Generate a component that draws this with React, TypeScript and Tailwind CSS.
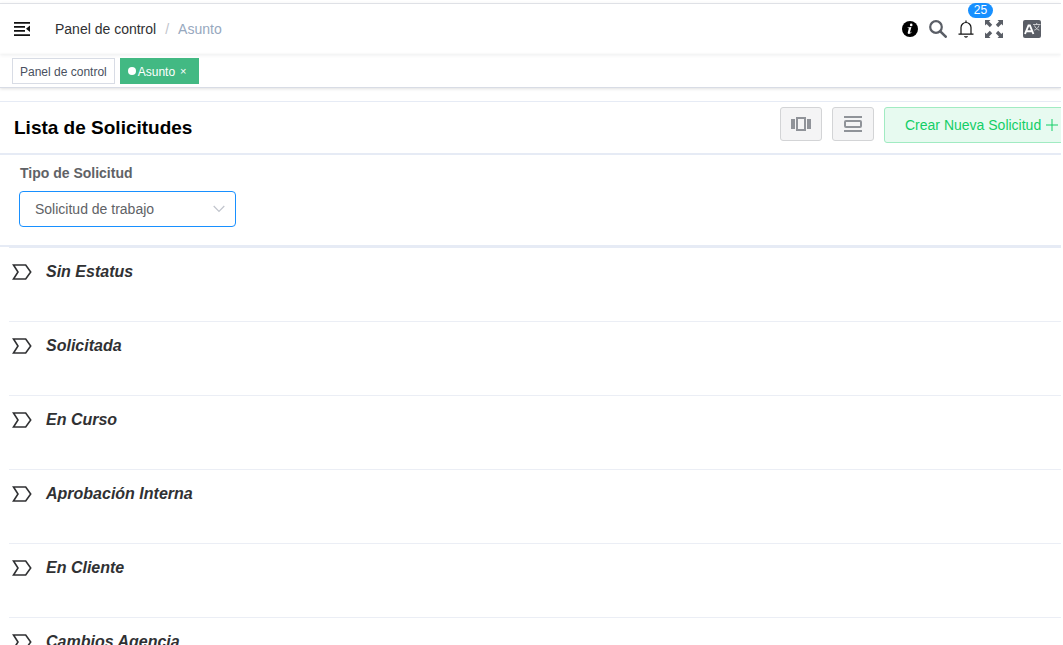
import React, { useState } from "react";

const statuses = [
  "Sin Estatus",
  "Solicitada",
  "En Curso",
  "Aprobación Interna",
  "En Cliente",
  "Cambios Agencia",
];

const FoldIcon = () => (
  <svg viewBox="0 0 16 14" className="h-[14px] w-4" fill="#111">
    <path d="M0 0h16v1.8H0zM0 4h11v1.8H0zM0 8h11v1.8H0zM0 12.2h16V14H0zM16 3.6v6.400l-4-3.200z" />
  </svg>
);

const InfoIcon = () => (
  <svg viewBox="0 0 16 16" className="h-4 w-4">
    <circle cx="8" cy="8" r="8" fill="#000" />
    <circle cx="9.2" cy="3.9" r="1.3" fill="#fff" />
    <path d="M5.6 6.4l3.8-.5-1.5 5.5c-.1.5.3.5.6.2l.8-.8.4.3c-.9 1.3-1.9 1.9-2.8 1.9-1 0-1.4-.7-1.1-1.7l1-3.7c.1-.5-.1-.7-1.3-.7z" fill="#fff" />
  </svg>
);

const SearchIcon = () => (
  <svg viewBox="0 0 18 18" className="h-[18px] w-[18px]" fill="none" stroke="#5a5e66">
    <circle cx="7" cy="7" r="5.8" strokeWidth="2.2" />
    <path d="M11.3 11.3l5.4 5.4" strokeWidth="2.6" strokeLinecap="round" />
  </svg>
);

const BellIcon = () => (
  <svg viewBox="0 0 16 18" className="h-[18px] w-4" fill="none" stroke="#111" strokeWidth="1.2">
    <path d="M8 .5v2M3 14V7.5a5 5 0 0 1 10 0V14M.5 14.1h15M6.5 16.3c.5 1 2.500 1 3 0" />
  </svg>
);

const FullscreenIcon = () => (
  <svg viewBox="0 0 18 18" className="h-[18px] w-[18px]" fill="#5a5e66">
    <path d="M0 0h5.500L4 1.600 7.200 4.800 4.800 7.200 1.600 4 0 5.500z" />
    <path d="M18 0v5.500L16.400 4l-3.200 3.200-2.400-2.400L14 1.600 12.500 0z" />
    <path d="M0 18v-5.500L1.600 14l3.200-3.200 2.400 2.400L4 16.400 5.500 18z" />
    <path d="M18 18h-5.500l1.500-1.600-3.200-3.200 2.400-2.400 3.200 3.200 1.600-1.500z" />
  </svg>
);

const LanguageIcon = () => (
  <svg viewBox="0 0 18 18" className="h-[18px] w-[18px]">
    <rect width="18" height="18" rx="2" fill="#5a5e66" />
    <path d="M2 14L5.500 5.500h1.400l3.500 8.500M3.500 11.300h5.400" fill="none" stroke="#fff" strokeWidth="1.9" />
    <path d="M10 4.500h7.500M13.700 3v1.500M11.500 5.500c.6 2 2.500 4 4.800 4.700M16 5.500c-.6 2-2.500 4-4.800 4.700" fill="none" stroke="#d5d6d8" strokeWidth=".9" />
  </svg>
);

const CarouselIcon = () => (
  <svg viewBox="0 0 20 16" className="h-4 w-5" fill="#909399">
    <path d="M0 3h4v10H0zM16 3h4v10h-4z" />
    <path d="M6 2h8v12H6z" fill="none" stroke="#909399" strokeWidth="2" />
  </svg>
);

const DayIcon = () => (
  <svg viewBox="0 0 18 16" className="h-4 w-[18px]" fill="none" stroke="#909399" strokeWidth="2">
    <path d="M0 1h18M0 15h18" />
    <rect x="1" y="5" width="16" height="6" rx="1" />
  </svg>
);

const LabelIcon = () => (
  <svg viewBox="0 0 20 16" className="h-4 w-5 shrink-0" fill="none" stroke="#303133" strokeWidth="1.6">
    <path d="M1.500 1h12.200L18.700 8l-5 7H1.500L6 8z" />
  </svg>
);

const App = () => {
  const [type, setType] = useState("trabajo");

  return (
    <div className="mr-[2px] overflow-x-hidden bg-white pt-[3px] font-['Liberation_Sans',Arial,sans-serif] text-[#303133]">
      <header className="flex h-[51px] items-center border-t border-[#dfe1e6] pr-5 pl-[14px] shadow-[0_1px_4px_rgba(0,21,41,0.08)]">
        <button aria-label="Contraer menú">
          <FoldIcon />
        </button>
        <nav className="ml-[25px] flex flex-1 gap-[9px] text-sm">
          <a href="#panel">Panel de control</a>
          <span className="text-[#c0c4cc]">/</span>
          <span className="text-[#97a8be]">Asunto</span>
        </nav>
        <div className="flex items-center gap-[11px]">
          <button aria-label="Información">
            <InfoIcon />
          </button>
          <button aria-label="Buscar">
            <SearchIcon />
          </button>
          <button aria-label="Notificaciones" className="relative">
            <BellIcon />
            <span className="absolute -top-[17px] left-[10px] h-[15px] w-[25px] rounded-full bg-[#1890ff] text-center text-xs leading-[15px] text-white">
              25
            </span>
          </button>
          <button aria-label="Pantalla completa">
            <FullscreenIcon />
          </button>
          <button aria-label="Idioma" className="ml-[9px]">
            <LanguageIcon />
          </button>
        </div>
      </header>

      <div className="flex h-[34px] items-center gap-[5px] border-b border-[#d8dce5] px-3 pb-1 pt-1 text-xs shadow-[0_1px_3px_rgba(0,0,0,0.12)]">
        <a href="#panel" className="h-[26px] border border-[#d8dce5] px-[7px] leading-[26px] text-[#495060]">
          Panel de control
        </a>
        <div className="flex h-[26px] items-center bg-[#42b983] px-2 leading-[26px] text-white">
          <span className="mr-[2px] h-2 w-2 rounded-full bg-white" />
          <a href="#asunto" className="pt-[2px]">Asunto</a>
          <button aria-label="Cerrar Asunto" className="ml-[5px] w-[11px] text-left text-[11px]">×</button>
        </div>
      </div>

      <main className="mt-[13px]">
        <div className="flex h-[54px] items-start border-t border-b-2 border-t-[#e6ebf5] border-b-[#e6ebf5] pt-[5px] pl-[14px]">
          <h1 className="flex-1 pt-2 text-[19px] leading-[26px] font-bold text-black">Lista de Solicitudes</h1>
          <div className="-mr-[22px] flex shrink-0 items-start gap-[10px]">
            <button aria-label="Vista de tablero" className="flex h-[34px] w-[42px] items-center justify-center rounded-[3px] border border-[#d3d4d6] bg-[#f4f4f5]">
              <CarouselIcon />
            </button>
            <button aria-label="Vista de lista" className="flex h-[34px] w-[42px] items-center justify-center rounded-[3px] border border-[#d3d4d6] bg-[#f4f4f5]">
              <DayIcon />
            </button>
            <button className="flex h-9 w-[199px] items-center gap-[5px] rounded-[3px] border border-[#a1ebc2] bg-[#e7faf0] pl-5 text-sm text-[#13ce66]">
              Crear Nueva Solicitud
              <svg viewBox="0 0 12 12" className="h-3 w-3" stroke="#13ce66">
                <path d="M0 6h12M6 0v12" />
              </svg>
            </button>
          </div>
        </div>

        <div className="border-b-2 border-[#e6ebf5] px-[19px] pt-[7px] pb-[18px] text-sm text-[#606266]">
          <label htmlFor="tipo" className="block pl-px font-bold leading-[22px]">
            Tipo de Solicitud
          </label>
          <div className="mt-[7px] grid w-[217px] items-center">
            <select
              id="tipo"
              value={type}
              onChange={(e) => setType(e.target.value)}
              className="col-start-1 row-start-1 h-9 appearance-none rounded border border-[#1890ff] bg-white px-[15px]"
            >
              <option value="trabajo">Solicitud de trabajo</option>
            </select>
            <svg viewBox="0 0 12 8" className="pointer-events-none col-start-1 row-start-1 mr-[11px] h-2 w-3 justify-self-end" fill="none" stroke="#c0c4cc" strokeWidth="1.2">
              <path d="M.7 1L6 6.500 11.300 1" />
            </svg>
          </div>
        </div>

        <ul className="ml-[9px] border-t border-[#e6ebf5]">
          {statuses.map((status) => (
            <li key={status} className="h-[74px] border-b border-[#ebeef5] pt-3">
              <button className="flex items-center gap-[14px] pl-[3px] text-base font-bold italic">
                <LabelIcon />
                {status}
              </button>
            </li>
          ))}
        </ul>
      </main>
    </div>
  );
};

export default App;
